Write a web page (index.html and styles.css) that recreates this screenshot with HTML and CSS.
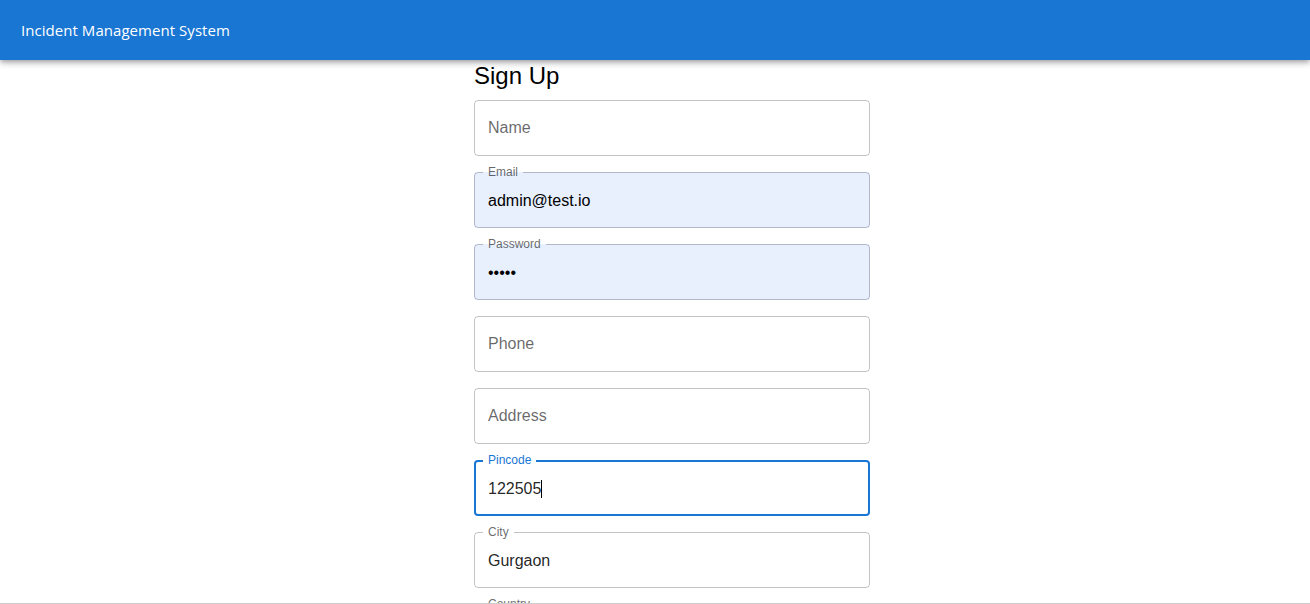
FILE: index.html
```html
<!DOCTYPE html>
<html lang="en">
<head>
<meta charset="utf-8">
<title>Incident Management System - Sign Up</title>
<link rel="stylesheet" href="styles.css">
</head>
<body>
<header class="appbar">
  <div class="appbar-title">Incident Management System</div>
</header>
<main class="page">
  <form class="signup">
    <h1 class="signup-title">Sign Up</h1>

    <div class="field">
      <label class="label">Name</label>
      <input class="input" type="text">
      <fieldset class="outline"><legend class="legend empty"></legend></fieldset>
    </div>

    <div class="field filled autofill">
      <label class="label">Email</label>
      <input class="input" type="email" value="admin@test.io">
      <fieldset class="outline"><legend class="legend"><span>Email</span></legend></fieldset>
    </div>

    <div class="field filled autofill">
      <label class="label">Password</label>
      <input class="input" type="password" value="admin">
      <fieldset class="outline"><legend class="legend"><span>Password</span></legend></fieldset>
    </div>

    <div class="field">
      <label class="label">Phone</label>
      <input class="input" type="text">
      <fieldset class="outline"><legend class="legend empty"></legend></fieldset>
    </div>

    <div class="field">
      <label class="label">Address</label>
      <input class="input" type="text">
      <fieldset class="outline"><legend class="legend empty"></legend></fieldset>
    </div>

    <div class="field filled focused">
      <label class="label">Pincode</label>
      <input class="input" type="text" value="122505">
      <span class="caret"></span>
      <fieldset class="outline"><legend class="legend"><span>Pincode</span></legend></fieldset>
    </div>

    <div class="field filled">
      <label class="label">City</label>
      <input class="input" type="text" value="Gurgaon">
      <fieldset class="outline"><legend class="legend"><span>City</span></legend></fieldset>
    </div>

    <div class="field filled">
      <label class="label">Country</label>
      <input class="input" type="text" value="India">
      <fieldset class="outline"><legend class="legend"><span>Country</span></legend></fieldset>
    </div>
  </form>
</main>
<div class="bottom-edge"></div>
</body>
</html>
```

FILE: styles.css
```css
html, body {
  margin: 0;
  padding: 0;
  background: #fff;
  overflow: hidden;
}

body {
  font-family: "Liberation Sans", Arial, sans-serif;
  color: rgba(0, 0, 0, 0.87);
}

.appbar {
  position: relative;
  z-index: 2;
  height: 60px;
  background: #1976d2;
  display: flex;
  align-items: center;
  padding: 0 21px;
  box-shadow: 0 2px 4px -1px rgba(0,0,0,0.2), 0 4px 5px 0 rgba(0,0,0,0.14), 0 1px 10px 0 rgba(0,0,0,0.12);
}

.appbar-title {
  color: #fff;
  font-family: "Open Sans", "Noto Sans", sans-serif;
  font-size: 15px;
  letter-spacing: 0.05px;
}

.page {
  display: flex;
  padding-left: 474px;
}

.signup {
  width: 396px;
  display: flex;
  flex-direction: column;
}

.signup-title {
  margin: 0 0 8px;
  font-size: 24px;
  font-weight: 400;
  line-height: 32px;
  color: #000;
}

.field {
  position: relative;
  height: 56px;
  margin-bottom: 16px;
  border-radius: 4px;
}

.field.autofill {
  background: #e8f0fe;
}

.input {
  box-sizing: border-box;
  width: 100%;
  height: 56px;
  border: 0;
  outline: 0;
  background: transparent;
  padding: 2px 14px 0;
  font-family: "Liberation Sans", Arial, sans-serif;
  font-size: 16px;
  color: rgba(0, 0, 0, 0.87);
  position: relative;
  z-index: 1;
}

.autofill .input {
  color: #000;
}

.label {
  position: absolute;
  left: 14px;
  top: 18px;
  font-size: 16px;
  line-height: 20px;
  color: rgba(0, 0, 0, 0.6);
  z-index: 2;
}

.filled .label {
  top: -7px;
  font-size: 12px;
  line-height: 14px;
}

.focused .label {
  color: #1976d2;
}

.outline {
  position: absolute;
  top: -5px;
  left: 0;
  right: 0;
  bottom: 0;
  margin: 0;
  padding: 0 8px;
  border: 1px solid rgba(0, 0, 0, 0.23);
  border-radius: 4px;
  pointer-events: none;
  min-width: 0;
}

.autofill .outline {
  border-color: rgba(50, 60, 80, 0.3);
}

.focused .outline {
  border: 2px solid #1976d2;
  padding: 0 7px;
}

.legend {
  padding: 0;
  font-size: 12px;
  line-height: 11px;
  height: 11px;
  visibility: hidden;
  white-space: nowrap;
}

.legend.empty {
  width: 0;
  max-width: 0.01px;
}

.legend span {
  padding: 0 5px;
  display: inline-block;
}

.caret {
  position: absolute;
  left: 67px;
  top: 20px;
  width: 1px;
  height: 18px;
  background: #000;
  z-index: 2;
}

.bottom-edge {
  position: fixed;
  left: 0;
  right: 0;
  bottom: 0;
  height: 1px;
  background: #cccccc;
  z-index: 5;
}
```
